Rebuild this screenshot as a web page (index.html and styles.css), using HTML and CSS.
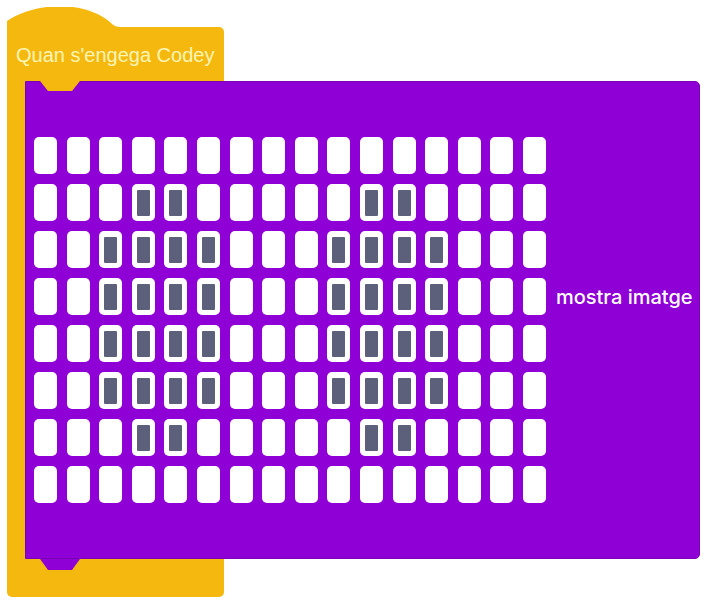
FILE: index.html
```html
<html>
  <head>
    <meta charset="utf-8">
    <title>Quan s'engega Codey</title>
    <link rel="stylesheet" href="styles.css">
  </head>
  <body>
    <div class='script'>
      <svg class='hat-cap' width='217' height='20' viewBox='0 0 217 20'>
        <path d='M0,20 L0,14 C30,-6 80,-6 104,16 C107,19 110,20 114,20 Z' fill='#f4b80e' />
      </svg>
      <div class='hat-head'>Quan s'engega Codey</div>
      <div class='hat-mouth'>
        <div class='hat-arm'></div>
        <div class='block'>
          <div class='leds' id='leds'></div>
          <div class='block-label'>mostra imatge</div>
        </div>
      </div>
      <div class='hat-foot'></div>
    </div>
    <script>
      // 16 x 8 led matrix, 1 = lit
      var image = [
        '0000000000000000',
        '0001100000110000',
        '0011110001111000',
        '0011110001111000',
        '0011110001111000',
        '0011110001111000',
        '0001100000110000',
        '0000000000000000'
      ];

      var leds = document.querySelector('#leds');
      image.forEach(function(row) {
        for (var i = 0; i < row.length; i++) {
          var led = document.createElement('div');
          led.className = row[i] == '1' ? 'led on' : 'led';
          leds.appendChild(led);
        }
      });
    </script>
  </body>
</html>
```

FILE: styles.css
```css
body {
  margin: 0;
  background: #ffffff;
  font-family: "Liberation Sans", Arial, sans-serif;
}

.script {
  padding-top: 7px;
  padding-left: 7px;
}

.hat-cap {
  display: block;
}

.hat-head {
  width: 217px;
  height: 54px;
  box-sizing: border-box;
  padding-left: 9px;
  padding-top: 2px;
  display: flex;
  align-items: center;
  background: #f4b80e;
  border-top-right-radius: 5px;
  color: #fff5b5;
  font-size: 20px;
}

.hat-mouth {
  display: flex;
}
.hat-arm {
  width: 18px;
  background: #f4b80e;
}

.block {
  position: relative;
  width: 675px;
  height: 478px;
  box-sizing: border-box;
  padding: 55px 0 0 8px;
  display: flex;
  align-items: flex-start;
  background: #8f00d6;
  border: 1px solid #7a00b6;
  border-radius: 0 5px 5px 0;
}
.block::before {
  content: '';
  position: absolute;
  left: 14px;
  top: -1px;
  width: 40px;
  height: 10px;
  background: #f4b80e;
  clip-path: polygon(0 0, 100% 0, 80% 100%, 20% 100%);
}
.block::after {
  content: '';
  position: absolute;
  left: 14px;
  bottom: -12px;
  width: 40px;
  height: 11px;
  background: #8f00d6;
  clip-path: polygon(0 0, 100% 0, 80% 100%, 20% 100%);
}

.leds {
  display: grid;
  grid-template-columns: repeat(16, 23px);
  grid-auto-rows: 37px;
  column-gap: 9.6px;
  row-gap: 10px;
}
.led {
  background: #ffffff;
  border-radius: 5px;
  position: relative;
}
.led.on::after {
  content: '';
  position: absolute;
  left: 5px;
  right: 5px;
  top: 6px;
  bottom: 5px;
  background: #5d607a;
  border-radius: 1px;
}

.block-label {
  margin-left: 10px;
  margin-top: 147px;
  color: #ffffff;
  font-family: Inter, "Liberation Sans", sans-serif;
  font-weight: 500;
  font-size: 20px;
  line-height: 26px;
}

.hat-foot {
  width: 217px;
  height: 38px;
  background: #f4b80e;
  border-radius: 0 0 5px 5px;
}
```
